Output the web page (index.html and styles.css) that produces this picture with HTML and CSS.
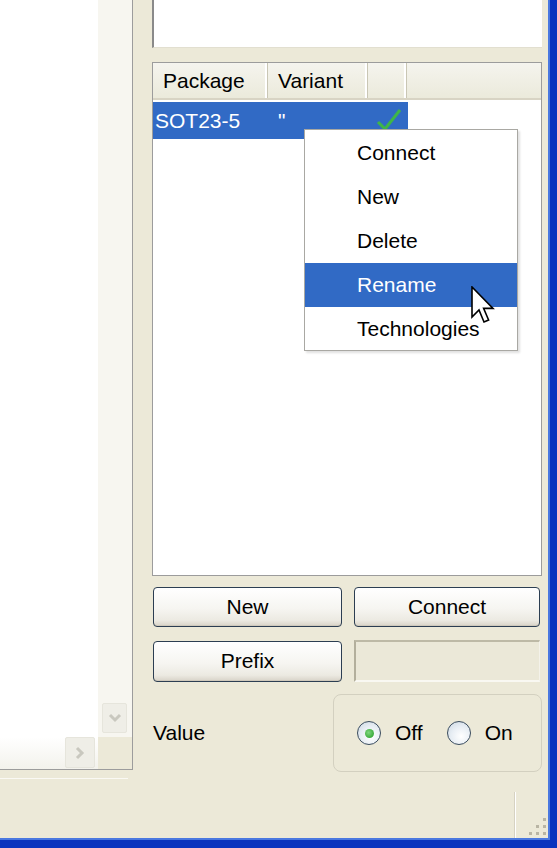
FILE: index.html
```html
<!DOCTYPE html>
<html>
<head>
<meta charset="utf-8">
<link rel="stylesheet" href="styles.css">
</head>
<body>
<div class="window">
  <div class="client">
    <div class="content">
      <div class="leftcol">
        <div class="leftpane">
          <div class="lp-view"></div>
          <div class="vscroll">
            <div class="sbtn vbtn">
              <svg width="14" height="10" viewBox="0 0 14 10"><path d="M2 2 L7 7 L12 2" fill="none" stroke="#c9c8bf" stroke-width="3"/></svg>
            </div>
          </div>
          <div class="hscroll">
            <div class="sbtn hbtn">
              <svg width="10" height="14" viewBox="0 0 10 14"><path d="M2 2 L7 7 L2 12" fill="none" stroke="#c9c8bf" stroke-width="3"/></svg>
            </div>
          </div>
          <div class="corner"></div>
        </div>
        <div class="splitline"></div>
      </div>
      <div class="rightpanel">
        <div class="memo"></div>
        <div class="listview">
          <div class="lv-header">
            <div class="hcol c1">Package</div>
            <div class="hcol c2">Variant</div>
            <div class="hcol c3"></div>
            <div class="hcol c4"></div>
          </div>
          <div class="lv-row">
            <div class="cell c1 first">SOT23-5</div>
            <div class="cell c2">"</div>
            <div class="cell c3">
              <svg width="30" height="30" viewBox="0 0 30 30"><path d="M4 18 L11 25 L26 6" fill="none" stroke="#3fb548" stroke-width="3"/></svg>
            </div>
          </div>
        </div>
        <div class="btnrow">
          <button class="btn wide">New</button>
          <button class="btn narrow">Connect</button>
        </div>
        <div class="btnrow second">
          <button class="btn wide tall">Prefix</button>
          <div class="field"></div>
        </div>
        <div class="valuerow">
          <span class="label">Value</span>
          <div class="group">
            <span class="radio checked"></span><span class="rlabel">Off</span>
            <span class="radio on"></span><span class="rlabel">On</span>
          </div>
        </div>
      </div>
    </div>
    <div class="statusbar">
      <div class="sb-panel"></div>
      <div class="grip">
        <svg width="20" height="20" viewBox="0 0 20 20">
          <rect x="15" y="1" width="3" height="3" fill="#b9b5a4"/>
          <rect x="8" y="8" width="3" height="3" fill="#b9b5a4"/>
          <rect x="15" y="8" width="3" height="3" fill="#b9b5a4"/>
          <rect x="1" y="15" width="3" height="3" fill="#b9b5a4"/>
          <rect x="8" y="15" width="3" height="3" fill="#b9b5a4"/>
          <rect x="15" y="15" width="3" height="3" fill="#b9b5a4"/>
        </svg>
      </div>
    </div>
  </div>

  <div class="menu">
    <div class="mi">Connect</div>
    <div class="mi">New</div>
    <div class="mi">Delete</div>
    <div class="mi hl">Rename</div>
    <div class="mi">Technologies</div>
  </div>

  <svg class="cursor" width="24" height="38" viewBox="0 0 12 19">
    <path d="M0.5 0.5 L0.5 15.5 L4 12 L6.5 18 L8.8 17 L6.3 11.2 L11 11.2 Z" fill="#fff" stroke="#000" stroke-width="0.8" stroke-linejoin="miter"/>
  </svg>
</div>
</body>
</html>
```

FILE: styles.css
```css
html, body {
  margin: 0;
  padding: 0;
}

body {
  background: #ECE9D8;
  font-family: "Liberation Sans", Arial, sans-serif;
  font-size: 21px;
  color: #000;
}

.window {
  position: relative;
  width: 557px;
  height: 848px;
  box-sizing: border-box;
  border-right: 7px solid #0A33BE;
  border-bottom: 8px solid #0A33BE;
  overflow: hidden;
}

.client {
  height: 100%;
  box-sizing: border-box;
  border-right: 2px solid #4A78E0;
  border-bottom: 2px solid #4A78E0;
  display: flex;
  flex-direction: column;
}

.content {
  height: 790px;
  display: flex;
  align-items: flex-start;
  flex-shrink: 0;
}

/* left pane */
.leftcol {
  display: flex;
  flex-direction: column;
}

.leftpane {
  display: grid;
  grid-template-columns: 98px 34px;
  grid-template-rows: 737px 32px;
  border-right: 1px solid #9C9C9C;
  border-bottom: 1px solid #9C9C9C;
}

.lp-view {
  background: #fff;
}

.vscroll {
  background: #F7F6F0;
  display: flex;
  flex-direction: column;
  justify-content: flex-end;
  align-items: flex-start;
  padding: 0 0 4px 4px;
}

.hscroll {
  background: linear-gradient(#FFFFFF, #F3F2EC);
  display: flex;
  justify-content: flex-end;
  padding-right: 3px;
}

.corner {
  background: #ECE9D8;
}

.sbtn {
  display: flex;
  align-items: center;
  justify-content: center;
  background: #EFEEE7;
  border: 1px solid #E6E5DC;
  box-sizing: border-box;
  border-radius: 2px;
}

.vbtn {
  width: 25px;
  height: 30px;
}

.hbtn {
  width: 30px;
  height: 31px;
}

.splitline {
  margin-top: 8px;
  width: 128px;
  height: 1px;
  background: #FAF9F4;
}

/* right panel */
.rightpanel {
  margin-left: 19px;
  width: 390px;
  display: flex;
  flex-direction: column;
}

.memo {
  height: 48px;
  box-sizing: border-box;
  background: #fff;
  border-left: 2px solid #8A8A8A;
  border-bottom: 1px solid #E2DFD0;
}

.listview {
  margin-top: 14px;
  height: 514px;
  box-sizing: border-box;
  border: 1px solid #9C9C9C;
  background: #fff;
}

.lv-header {
  display: flex;
  height: 37px;
  box-sizing: border-box;
  background: linear-gradient(#F5F4EE, #EBEADB);
  border-bottom: 2px solid #D8D4C4;
}

.hcol {
  display: flex;
  align-items: center;
  box-sizing: border-box;
  padding-left: 10px;
  border-right: 1px solid #C9C6B4;
  box-shadow: inset -2px 0 0 #FFFFFF;
}

.c1 { width: 115px; }
.c2 { width: 100px; }
.c3 { width: 39px; }
.hcol.c4 { flex: 1; border-right: none; box-shadow: none; }

.lv-row {
  display: flex;
  margin-top: 2px;
  height: 37px;
  width: 255px;
  background: #316AC5;
  color: #fff;
}

.cell {
  display: flex;
  align-items: center;
  box-sizing: border-box;
  padding-left: 10px;
}

.cell.first {
  padding-left: 2px;
}

.cell.c3 {
  padding-left: 6px;
  align-items: flex-start;
  padding-top: 2px;
}

.btnrow {
  display: flex;
  gap: 12px;
  margin-top: 11px;
  padding-left: 1px;
  align-items: center;
}

.btnrow.second {
  margin-top: 13px;
}

.btn {
  font-family: inherit;
  font-size: 21px;
  color: #000;
  height: 40px;
  padding: 0;
  border: 1px solid #2C3E52;
  border-radius: 4px;
  background: linear-gradient(#FFFFFF 0%, #F6F5F1 55%, #ECEAE2 85%, #D8D3C8 100%);
  box-shadow: inset 0 -1px 0 #CFC9BC;
}

.btn.wide { width: 189px; }
.btn.narrow { width: 186px; }
.btn.tall { height: 41px; }

.field {
  width: 186px;
  height: 42px;
  box-sizing: border-box;
  background: #EBE8D8;
  border-style: solid;
  border-width: 2px 1px 2px 2px;
  border-color: #BDB9A6 #F4F2EA #F9F8F2 #B3AF9C;
}

.valuerow {
  margin-top: 12px;
  display: flex;
  align-items: center;
  justify-content: space-between;
}

.label {
  padding-left: 1px;
}

.group {
  width: 209px;
  height: 78px;
  box-sizing: border-box;
  border: 1px solid #D3D0C0;
  border-radius: 8px;
  display: flex;
  align-items: center;
  padding-left: 23px;
}

.radio {
  width: 24px;
  height: 24px;
  box-sizing: border-box;
  border-radius: 50%;
  border: 1px solid #3A4C5E;
  background: radial-gradient(circle at 60% 65%, #FFFFFF 0%, #E8EEF4 50%, #C9D5E0 100%);
  display: flex;
  align-items: center;
  justify-content: center;
}

.radio.checked::after {
  content: "";
  width: 9px;
  height: 9px;
  border-radius: 50%;
  background: radial-gradient(circle at 40% 40%, #7FD67F, #219A21);
}

.rlabel {
  margin-left: 14px;
}

.radio.on {
  margin-left: 24px;
}

/* status bar */
.statusbar {
  flex: 1;
  display: flex;
}

.sb-panel {
  width: 515px;
  margin-top: 2px;
  border-right: 1px solid #FFFFFF;
  box-shadow: inset -1px 0 0 #D6D2C2;
}

.grip {
  margin-left: auto;
  align-self: flex-end;
  display: flex;
  padding-bottom: 1px;
}

/* context menu */
.menu {
  position: absolute;
  left: 304px;
  top: 129px;
  width: 214px;
  height: 222px;
  box-sizing: border-box;
  border: 1px solid #A9A8A3;
  background: #fff;
  padding: 1px 0;
  box-shadow: 2px 2px 2px rgba(0, 0, 0, 0.12);
}

.mi {
  height: 44px;
  line-height: 44px;
  padding-left: 52px;
}

.mi.hl {
  background: #316AC5;
  color: #fff;
}

.cursor {
  position: absolute;
  left: 471px;
  top: 286px;
}
```
